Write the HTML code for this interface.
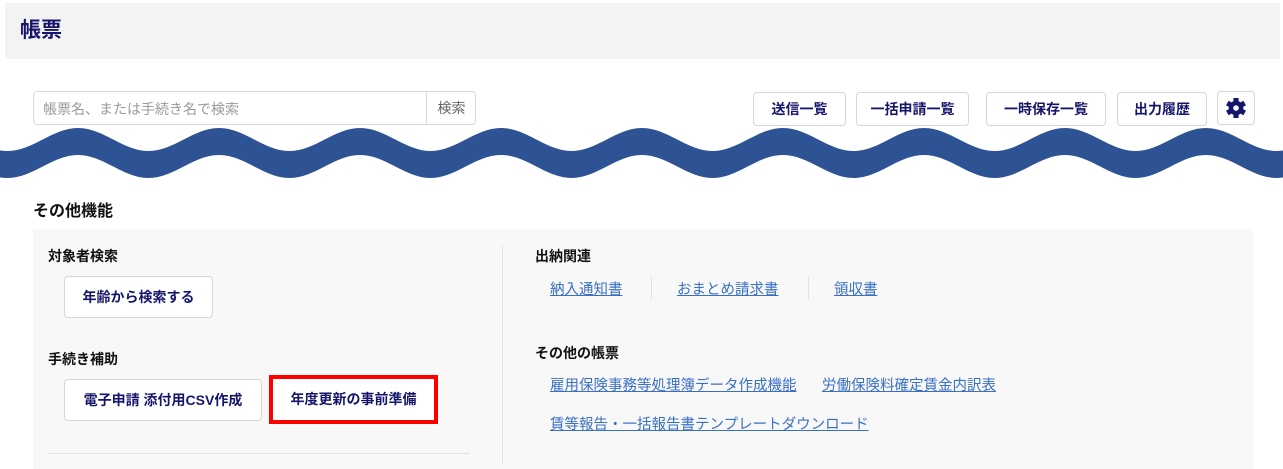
<!DOCTYPE html>
<html><head><meta charset="utf-8">
<style>
*{margin:0;padding:0;box-sizing:border-box}
body{width:1283px;height:465px;overflow:hidden;background:#fff;position:relative;font-family:"Liberation Sans","Noto Sans CJK JP",sans-serif;color:#222}
.a{position:absolute;white-space:nowrap}
.hdr{left:5px;top:3px;width:1275px;height:56px;background:#f3f3f3}
.title{left:20px;top:14px;font-size:21px;font-weight:bold;color:#15166b}
.inp{left:33px;top:91px;width:443px;height:34px;border:1px solid #d9d9d9;border-radius:4px;background:#fff}
.inp span{position:absolute;left:9px;top:7px;font-size:14px;color:#999}
.inp .b{position:absolute;left:392px;top:0;width:50px;height:32px;border-left:1px solid #d9d9d9;font-size:14px;color:#666;text-align:center;line-height:32px}
.btn{border:1px solid #d6d6d6;border-radius:4px;background:#fff;font-size:14px;font-weight:bold;color:#15166b;text-align:center}
.tb{top:92px;height:34px;line-height:32px}
.sec{font-size:16px;font-weight:bold;color:#111}
.panel{left:33px;top:229px;width:1220px;height:240px;background:#f8f8f8}
.h{font-size:14px;font-weight:bold;color:#111}
.lk{font-size:14.5px;color:#3a70c4;text-decoration:underline}
.sep{width:1px;height:24px;background:#e2e2e2}
</style></head><body>
<div class="a hdr"></div>
<div class="a title">帳票</div>
<div class="a inp"><span>帳票名、または手続き名で検索</span><div class="b">検索</div></div>
<div class="a btn tb" style="left:753px;width:93px">送信一覧</div>
<div class="a btn tb" style="left:856px;width:113px">一括申請一覧</div>
<div class="a btn tb" style="left:986px;width:120px">一時保存一覧</div>
<div class="a btn tb" style="left:1117px;width:90px">出力履歴</div>
<div class="a btn" style="left:1217px;top:91px;width:38px;height:34px">
<svg width="36" height="32" viewBox="0 0 36 32"><g transform="translate(18,16)" fill="#15166b">
<g id="t"><rect x="-2.6" y="-10" width="5.2" height="5"/></g>
<use href="#t" transform="rotate(60)"/><use href="#t" transform="rotate(120)"/><use href="#t" transform="rotate(180)"/><use href="#t" transform="rotate(240)"/><use href="#t" transform="rotate(300)"/>
<circle r="7.3"/><circle r="2.8" fill="#fff"/></g></svg></div>

<div class="a sec" style="left:33px;top:197px">その他機能</div>
<div class="a panel"></div>
<div class="a" style="left:502px;top:245px;width:1px;height:220px;background:#e4e4e4"></div>
<div class="a h" style="left:48px;top:246px">対象者検索</div>
<div class="a btn" style="left:64px;top:276px;width:149px;height:42px;line-height:40px">年齢から検索する</div>
<div class="a h" style="left:48px;top:349px">手続き補助</div>
<div class="a btn" style="left:64px;top:379px;width:198px;height:42px;line-height:40px">電子申請 添付用CSV作成</div>
<div class="a" style="left:269px;top:375px;width:169px;height:49px;border:4px solid #f00;background:#fff"></div>
<div class="a" style="left:269px;top:375px;width:169px;height:49px;font-size:14px;font-weight:bold;color:#15166b;text-align:center;line-height:49px">年度更新の事前準備</div>
<div class="a" style="left:48px;top:453px;width:422px;height:1px;background:#e2e2e2"></div>

<div class="a h" style="left:535px;top:246px">出納関連</div>
<div class="a lk" style="left:550px;top:278px">納入通知書</div>
<div class="a sep" style="left:651px;top:276px"></div>
<div class="a lk" style="left:677px;top:278px">おまとめ請求書</div>
<div class="a sep" style="left:808px;top:276px"></div>
<div class="a lk" style="left:834px;top:278px">領収書</div>
<div class="a h" style="left:535px;top:343px">その他の帳票</div>
<div class="a lk" style="left:550px;top:374px">雇用保険事務等処理簿データ作成機能</div>
<div class="a lk" style="left:822px;top:374px">労働保険料確定賃金内訳表</div>
<div class="a lk" style="left:550px;top:413px">賃等報告・一括報告書テンプレートダウンロード</div>

<svg class="a" style="left:0;top:0" width="1283" height="465" viewBox="0 0 1283 465">
<path fill="#2e5394" d="M-63 128 C-37.3 128 -18.2 151 7.5 151 S52.3 128 78 128 S122.8 151 148.5 151 S193.3 128 219 128 S263.8 151 289.5 151 S334.3 128 360 128 S404.8 151 430.5 151 S475.3 128 501 128 S545.8 151 571.5 151 S616.3 128 642 128 S686.8 151 712.5 151 S757.3 128 783 128 S827.8 151 853.5 151 S898.3 128 924 128 S968.8 151 994.5 151 S1039.3 128 1065 128 S1109.8 151 1135.5 151 S1180.3 128 1206 128 S1250.8 151 1276.5 151 S1321.3 128 1347 128 L1347 155 C1321.3 155 1302.2 178 1276.5 178 S1231.7 155 1206 155 S1161.2 178 1135.5 178 S1090.7 155 1065 155 S1020.2 178 994.5 178 S949.7 155 924 155 S879.2 178 853.5 178 S808.7 155 783 155 S738.2 178 712.5 178 S667.7 155 642 155 S597.2 178 571.5 178 S526.7 155 501 155 S456.2 178 430.5 178 S385.7 155 360 155 S315.2 178 289.5 178 S244.7 155 219 155 S174.2 178 148.5 178 S103.7 155 78 155 S33.2 178 7.5 178 S-37.3 155 -63 155 Z"/>
</svg>
</body></html>
